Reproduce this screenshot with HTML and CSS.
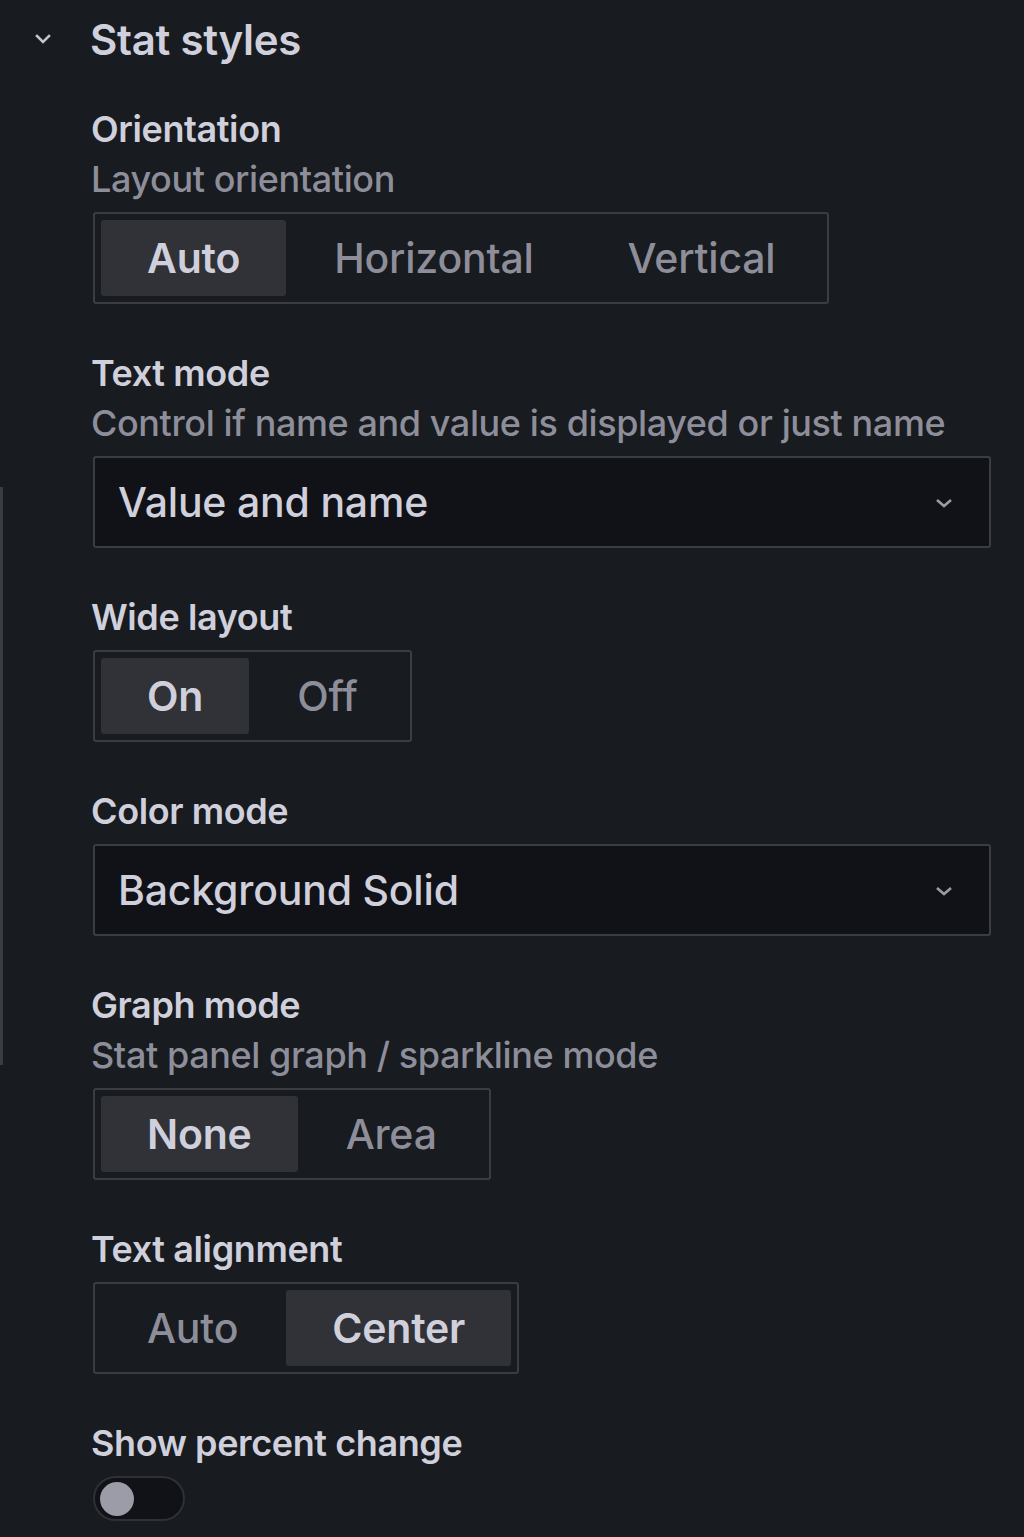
FILE: index.html
```html
<!DOCTYPE html>
<html>
<head>
<meta charset="utf-8">
<link rel="stylesheet" href="styles.css">
</head>
<body>
<div class="panel">
  <div class="rail"></div>
  <div class="header">
    <svg class="caret" width="20" height="14" viewBox="0 0 20 14"><polyline points="3,4 9,10 15,4" fill="none" stroke="#c4c4d0" stroke-width="2.6" stroke-linecap="square"/></svg>
    <span class="title">Stat styles</span>
  </div>
  <div class="body">
    <div class="field">
      <div class="label">Orientation</div>
      <div class="desc">Layout orientation</div>
      <div class="radio">
        <span class="opt active">Auto</span>
        <span class="opt">Horizontal</span>
        <span class="opt">Vertical</span>
      </div>
    </div>
    <div class="field">
      <div class="label">Text mode</div>
      <div class="desc">Control if name and value is displayed or just name</div>
      <div class="select">
        <span class="value">Value and name</span>
        <svg class="chev" width="22" height="12" viewBox="0 0 22 12"><polyline points="4,2 11,8 18,2" fill="none" stroke="#9a9aa8" stroke-width="2.6"/></svg>
      </div>
    </div>
    <div class="field">
      <div class="label">Wide layout</div>
      <div class="radio">
        <span class="opt active">On</span>
        <span class="opt">Off</span>
      </div>
    </div>
    <div class="field">
      <div class="label">Color mode</div>
      <div class="select">
        <span class="value">Background Solid</span>
        <svg class="chev" width="22" height="12" viewBox="0 0 22 12"><polyline points="4,2 11,8 18,2" fill="none" stroke="#9a9aa8" stroke-width="2.6"/></svg>
      </div>
    </div>
    <div class="field">
      <div class="label">Graph mode</div>
      <div class="desc">Stat panel graph / sparkline mode</div>
      <div class="radio">
        <span class="opt active">None</span>
        <span class="opt">Area</span>
      </div>
    </div>
    <div class="field">
      <div class="label">Text alignment</div>
      <div class="radio">
        <span class="opt">Auto</span>
        <span class="opt active">Center</span>
      </div>
    </div>
    <div class="field">
      <div class="label">Show percent change</div>
      <div class="toggle"><span class="knob"></span></div>
    </div>
  </div>
</div>
</body>
</html>
```
FILE: styles.css
```css
html, body {
  margin: 0;
  padding: 0;
  background: #181b1f;
}
body {
  font-family: Inter, "Noto Sans", sans-serif;
  color: #ccccdc;
  width: 1024px;
  height: 1537px;
  overflow: hidden;
}
.panel {
  position: relative;
  padding-top: 10px;
}
.rail {
  position: absolute;
  left: 0;
  top: 487px;
  width: 3px;
  height: 578px;
  background: #3a3c41;
}
.header {
  display: flex;
  align-items: center;
  height: 60px;
}
.caret {
  margin-left: 34px;
  margin-right: 38px;
  margin-top: -2px;
}
.title {
  font-size: 42px;
  line-height: 60px;
  font-weight: 600;
  letter-spacing: -0.3px;
  color: #d0d0dc;
  margin-left: -2px;
}
.body {
  padding-left: 93px;
  padding-top: 34px;
}
.field {
  margin-bottom: 44px;
}
.label {
  font-size: 36px;
  line-height: 50px;
  font-weight: 600;
  letter-spacing: -0.4px;
  color: #d0d0dc;
  margin-left: -2px;
}
.desc {
  font-size: 36px;
  line-height: 50px;
  font-weight: 500;
  letter-spacing: -0.4px;
  color: #8e8e9b;
  margin-left: -2px;
}
.label + .radio,
.desc + .radio,
.label + .select,
.desc + .select {
  margin-top: 8px;
}
.label + .toggle {
  margin-top: 8px;
}
.radio {
  display: inline-flex;
  box-sizing: border-box;
  height: 92px;
  padding: 6px;
  border: 2px solid #3b3d42;
  border-radius: 3px;
  gap: 2px;
}
.opt {
  display: flex;
  align-items: center;
  padding: 0 46px;
  font-size: 41px;
  font-weight: 500;
  letter-spacing: -0.2px;
  color: #8e8e9b;
  border-radius: 3px;
}
.opt.active {
  background: #303237;
  color: #d0d0dc;
  font-weight: 600;
}
.select {
  box-sizing: border-box;
  width: 898px;
  height: 92px;
  border: 2px solid #3b3d42;
  border-radius: 3px;
  background: #111217;
  display: flex;
  align-items: center;
  justify-content: space-between;
  padding: 0 34px 0 23px;
}
.value {
  font-size: 41px;
  font-weight: 500;
  letter-spacing: -0.2px;
  color: #d0d0dc;
}
.chev {
  margin-top: 4px;
}
.toggle {
  box-sizing: border-box;
  width: 92px;
  height: 45px;
  border: 2px solid #2e3036;
  border-radius: 23px;
  background: #111217;
  display: flex;
  align-items: center;
  padding-left: 5px;
}
.knob {
  width: 34px;
  height: 34px;
  border-radius: 50%;
  background: #9c9ca8;
}
```
